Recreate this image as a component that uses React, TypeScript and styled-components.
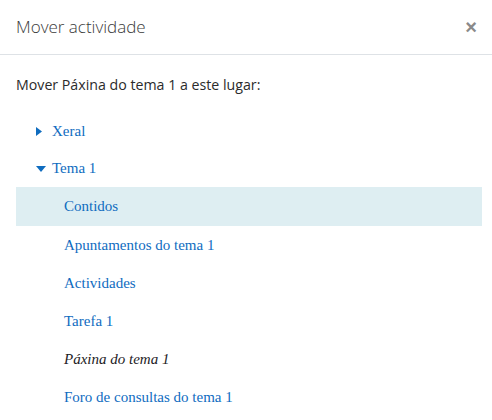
import React from 'react'
import styled, { createGlobalStyle } from 'styled-components'

const GlobalStyle = createGlobalStyle`
  html, body {
    margin: 0;
    padding: 0;
    background: #ffffff;
  }
  body {
    font-family: 'Open Sans', 'Noto Sans', sans-serif;
    color: #1d2125;
  }
`

interface Item {
  label: string
  current?: boolean
  selected?: boolean
}

const items: Item[] = [
  { label: 'Contidos', selected: true },
  { label: 'Apuntamentos do tema 1' },
  { label: 'Actividades' },
  { label: 'Tarefa 1' },
  { label: 'Páxina do tema 1', current: true },
  { label: 'Foro de consultas do tema 1' },
]

const CaretRight = () => (
  <svg width="6" height="9" viewBox="0 0 6 9">
    <path d="M0 0 L6 4.5 L0 9 Z" fill="#0f6cbf" />
  </svg>
)

const CaretDown = () => (
  <svg width="10" height="6" viewBox="0 0 10 6">
    <path d="M0 0 L10 0 L5 6 Z" fill="#0f6cbf" />
  </svg>
)

export default function App() {
  return (
    <>
      <GlobalStyle />
      <Modal>
        <Header>
          <Title>Mover actividade</Title>
          <Close aria-label="Pechar">×</Close>
        </Header>
        <Body>
          <Intro>Mover Páxina do tema 1 a este lugar:</Intro>
          <Tree>
            <Section>
              <Caret>
                <CaretRight />
              </Caret>
              <Link>Xeral</Link>
            </Section>
            <Section>
              <Caret>
                <CaretDown />
              </Caret>
              <Link>Tema 1</Link>
            </Section>
            {items.map((item) => (
              <Row key={item.label} $selected={item.selected}>
                {item.current ? (
                  <Current>{item.label}</Current>
                ) : (
                  <Link>{item.label}</Link>
                )}
              </Row>
            ))}
          </Tree>
        </Body>
      </Modal>
    </>
  )
}

const Modal = styled.div`
  width: 492px;
  height: 420px;
  overflow: hidden;
  background: #fff;
`

const Header = styled.div`
  height: 54px;
  display: flex;
  align-items: center;
  justify-content: space-between;
  padding: 0 15px 0 16px;
  border-bottom: 1px solid #dee2e6;
`

const Title = styled.h5`
  margin: 0 0 1px;
  font-weight: 300;
  font-size: 17px;
  color: #3a3a3a;
`

const Close = styled.button`
  border: 0;
  background: none;
  padding: 0;
  font-family: 'Liberation Sans', sans-serif;
  font-size: 20px;
  font-weight: 700;
  line-height: 1;
  color: #8a8a8a;
`

const Body = styled.div`
  padding: 16px 10px 16px 16px;
`

const Intro = styled.p`
  margin: 0 0 14px;
  font-size: 14.2px;
  line-height: 28px;
  color: #2b2b2b;
`

const Tree = styled.div`
  display: flex;
  flex-direction: column;
`

const Section = styled.div`
  height: 37px;
  display: flex;
  align-items: center;
  padding-left: 20px;
`

const Caret = styled.span`
  width: 16px;
  display: inline-flex;
  align-items: center;
`

const Row = styled.div<{ $selected?: boolean }>`
  height: ${(p) => (p.$selected ? '39px' : '38px')};
  display: flex;
  align-items: center;
  padding-left: 48px;
  background: ${(p) => (p.$selected ? '#deeef2' : 'transparent')};
`

const Link = styled.span`
  font-family: 'Liberation Serif', serif;
  font-size: 15px;
  color: #0f6cbf;
`

const Current = styled.span`
  font-family: 'Liberation Serif', serif;
  font-size: 15px;
  font-style: italic;
  color: #1d2125;
`
